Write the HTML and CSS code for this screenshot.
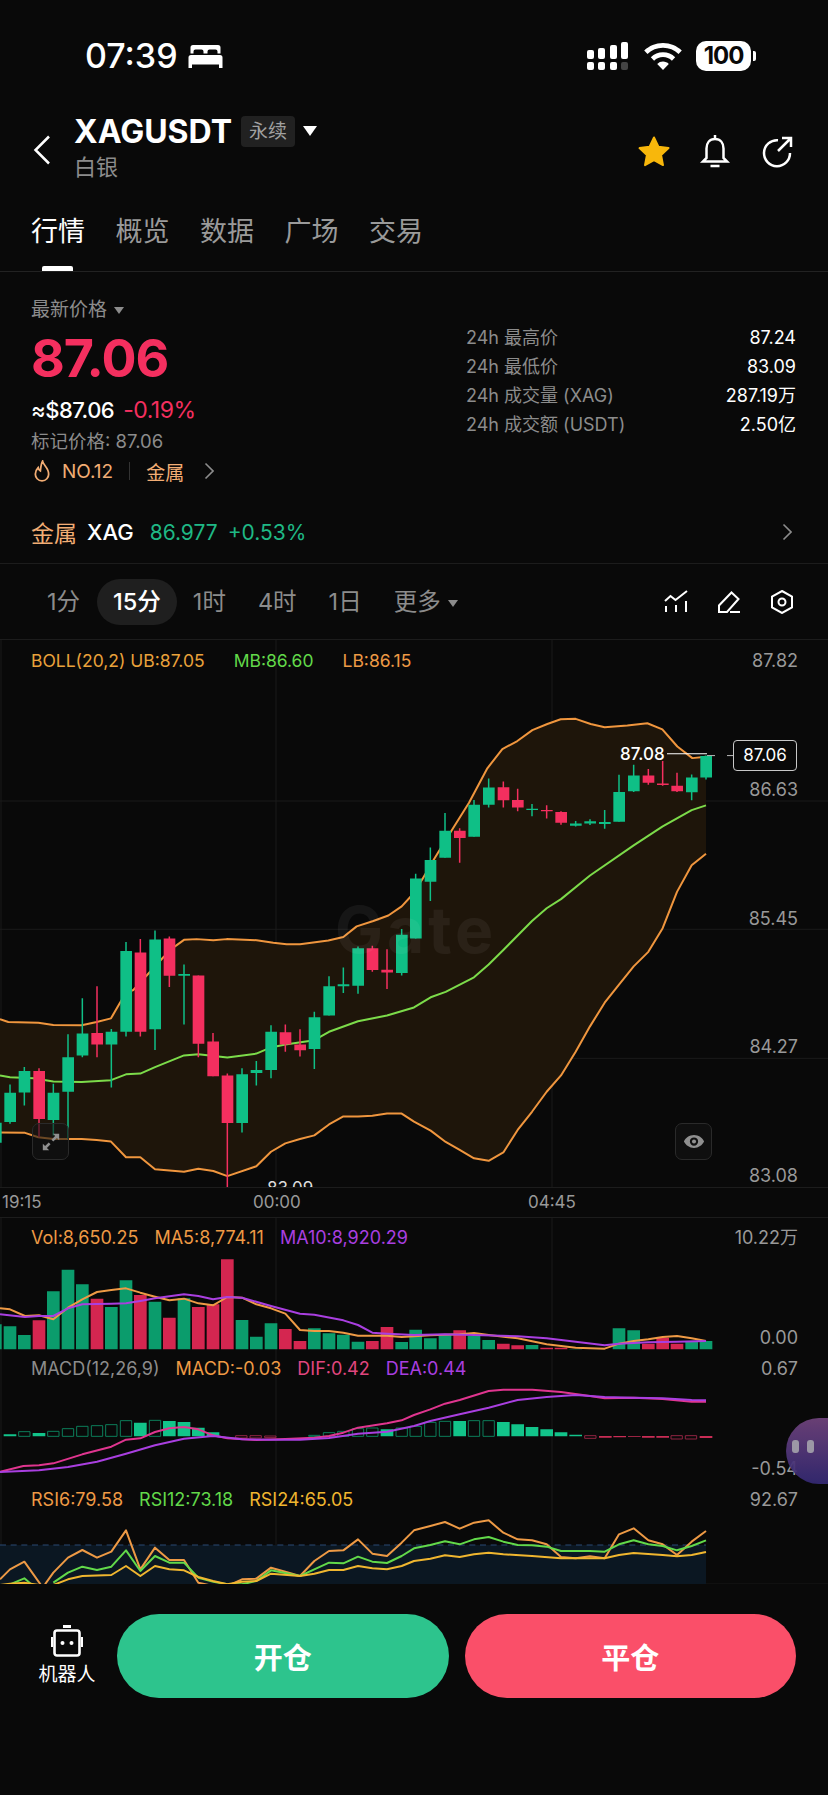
FILE: index.html
```html
<!DOCTYPE html>
<html lang="zh-CN">
<head>
    <meta charset="UTF-8">
    <meta name="viewport" content="width=device-width, initial-scale=1.0">
    <title>XAGUSDT 永续</title>
    <link rel="stylesheet" href="styles.css">
</head>
<body>
    <div class="status-bar">
        <div class="status-left">
            <span class="clock">07:39</span>
            <svg class="bed-icon" viewBox="0 0 35 24" aria-hidden="true"><path d="M5 1h25a2.500 2.500 0 0 1 2.500 2.500V9.500h-3V7.500a2 2 0 0 0-2-2h-6a2 2 0 0 0-2 2v2h-4v-2a2 2 0 0 0-2-2h-6a2 2 0 0 0-2 2v2h-3V3.500A2.500 2.500 0 0 1 5 1z"/><path d="M3 11h29a2.500 2.500 0 0 1 2.500 2.500V24h-3.500v-3.500H4V24H.5V13.500A2.500 2.500 0 0 1 3 11z"/></svg>
        </div>
        <div class="status-right">
            <svg class="signal-icon" viewBox="0 0 42 28" aria-hidden="true">
                <rect x="0" y="8" width="7" height="9" rx="2"/>
                <rect x="11" y="6" width="7" height="11" rx="2"/>
                <rect x="23" y="3" width="7" height="14" rx="2"/>
                <rect x="34" y="0" width="7" height="17" rx="2"/>
                <rect x="0" y="20" width="7" height="8" rx="2"/>
                <rect x="11" y="20" width="7" height="8" rx="2"/>
                <rect x="23" y="20" width="7" height="8" rx="2"/>
                <rect class="signal-off" x="34" y="20" width="7" height="8" rx="2"/>
            </svg>
            <svg class="wifi-icon" viewBox="0 0 38 27" aria-hidden="true"><path d="M19 0c7.300 0 13.900 2.900 18.800 7.500l-3.300 3.500A22.300 22.300 0 0 0 19 4.800 22.300 22.300 0 0 0 3.500 11L.2 7.500C5.100 2.900 11.700 0 19 0z"/><path d="M19 9.300c4.700 0 9 1.900 12.200 4.900l-3.300 3.500A13 13 0 0 0 19 14.100a13 13 0 0 0-8.900 3.600l-3.300-3.500A17.700 17.700 0 0 1 19 9.300z"/><path d="M19 18.600c2.300 0 4.300.9 5.800 2.300L19 27l-5.800-6.100a8.400 8.400 0 0 1 5.800-2.300z"/></svg>
            <div class="battery"><span class="battery-level">100</span><span class="battery-nub"></span></div>
        </div>
    </div>

    <header class="nav">
        <svg class="back-icon" viewBox="0 0 18 30" aria-hidden="true"><path d="M16 1.500 2.500 15 16 28.500"/></svg>
        <div class="symbol">
            <div class="symbol-row">
                <span class="symbol-name">XAGUSDT</span>
                <span class="symbol-badge">永续</span>
                <span class="caret caret-white"></span>
            </div>
            <div class="symbol-sub">白银</div>
        </div>
        <div class="nav-actions">
            <svg class="nav-star" viewBox="0 0 34 32" aria-hidden="true"><path d="M17 2.500l4.400 9.300 10.100 1.300-7.400 7 1.900 10-9-4.900-9 4.900 1.900-10-7.400-7 10.100-1.300z"/></svg>
            <svg class="nav-icon" viewBox="0 0 32 34" aria-hidden="true"><path d="M16 5c-5.500 0-8.500 4-8.500 9.500v9.500L4 27.500h24L24.500 24v-9.500C24.500 9 21.500 5 16 5zM16 1v4M11.500 32h9"/></svg>
            <svg class="nav-icon" viewBox="0 0 32 30" aria-hidden="true"><path d="M17 4.200A13 13 0 1 0 29 17M17 15 30 2M21 2h9v9"/></svg>
        </div>
    </header>

    <nav class="tabs">
        <a class="tab active">行情</a>
        <a class="tab">概览</a>
        <a class="tab">数据</a>
        <a class="tab">广场</a>
        <a class="tab">交易</a>
    </nav>

    <section class="market">
        <div class="quote">
            <div class="quote-type">最新价格<span class="caret caret-grey"></span></div>
            <div class="last-price">87.06</div>
            <div class="quote-usd">≈$87.06<span class="quote-change">-0.19%</span></div>
            <div class="mark-price">标记价格: 87.06</div>
            <div class="hot-row">
                <svg class="flame-icon" viewBox="0 0 18 20" aria-hidden="true"><path d="M9.500 1c.5 3.500 5.500 6 5.500 11.500A6 6 0 0 1 9 19a6 6 0 0 1-6-6.500c0-2.500 1.300-4.200 2.500-5.500.3 1.700 1 2.600 2 3 .4-3.500.6-6.500 2-9z"/></svg>
                <span class="hot-rank">NO.12</span>
                <span class="hot-sep"></span>
                <span class="hot-tag">金属</span>
                <svg class="chevron chevron-hot" viewBox="0 0 10 18" aria-hidden="true"><path d="M1.500 1.500 9 9l-7.500 7.500"/></svg>
            </div>
        </div>
        <div class="stats">
            <div class="stat-row"><span class="stat-label">24h 最高价</span><span class="stat-value">87.24</span></div>
            <div class="stat-row"><span class="stat-label">24h 最低价</span><span class="stat-value">83.09</span></div>
            <div class="stat-row"><span class="stat-label">24h 成交量 (XAG)</span><span class="stat-value">287.19万</span></div>
            <div class="stat-row"><span class="stat-label">24h 成交额 (USDT)</span><span class="stat-value">2.50亿</span></div>
        </div>
    </section>

    <div class="index-row">
        <span class="index-tag">金属</span>
        <span class="index-name">XAG</span>
        <span class="index-price">86.977</span>
        <span class="index-change">+0.53%</span>
        <svg class="chevron chevron-index" viewBox="0 0 10 18" aria-hidden="true"><path d="M1.500 1.500 9 9l-7.500 7.500"/></svg>
    </div>

    <div class="intervals">
        <span class="interval">1分</span>
        <span class="interval active">15分</span>
        <span class="interval">1时</span>
        <span class="interval">4时</span>
        <span class="interval">1日</span>
        <span class="interval">更多<span class="caret caret-grey"></span></span>
        <div class="chart-tools">
            <svg viewBox="0 0 24 24" aria-hidden="true"><path d="M1 11l5.500-5 5 4L23 1M2 16v6M12 15v7M22 11v11"/></svg>
            <svg viewBox="0 0 24 24" aria-hidden="true"><path d="M2 22v-6.500L14.500 2.500l7 6.500L10 22zM13 22h10"/></svg>
            <svg viewBox="0 0 24 24" aria-hidden="true"><path d="M12 1l10 5.500v11L12 23 2 17.500v-11z"/><circle cx="12" cy="12" r="3.500"/></svg>
        </div>
    </div>

    <div class="chart">
        <div class="main-pane">
            <svg class="main-plot" viewBox="0 -3 2484 1505" preserveAspectRatio="none" aria-hidden="true">
                <path class="grid" d="M0 440H2484M0 793H2484M0 1148H2484M828 -3V1502M1656 -3V1502M3 -3V1502"/>
                <path class="boll-band" d="M0 1040L25 1048 115 1050 160 1056 245 1057 290 1048 333 1038 360 995 378 968 400 960 440 920 490 870 525 840 552 822 590 820 640 823 680 820 770 823 820 830 860 834 900 834 985 824 1030 814 1070 785 1120 770 1165 755 1205 730 1235 700 1267 655 1302 600 1352 525 1407 445 1462 350 1507 297 1552 275 1597 245 1642 228 1682 215 1727 214 1772 228 1814 237 1882 232 1942 226 1987 243 2032 290 2077 322 2118 318V585L2075 617 2031 690 1988 790 1945 855 1901 895 1857 945 1814 995 1770 1060 1727 1130 1683 1195 1640 1240 1596 1295 1553 1345 1510 1407 1466 1430 1422 1423 1379 1400 1337 1378 1292 1347 1242 1322 1205 1300 1161 1300 1117 1306 1074 1308 1030 1308 987 1330 943 1360 900 1370 856 1382 813 1405 769 1445 682 1472 640 1458 595 1452 552 1460 465 1453 421 1420 378 1420 333 1377 290 1373 245 1370 160 1370 115 1365 75 1353 0 1352z"/>
                <path class="line line-boll" d="M0 1040L25 1048 115 1050 160 1056 245 1057 290 1048 333 1038 360 995 378 968 400 960 440 920 490 870 525 840 552 822 590 820 640 823 680 820 770 823 820 830 860 834 900 834 985 824 1030 814 1070 785 1120 770 1165 755 1205 730 1235 700 1267 655 1302 600 1352 525 1407 445 1462 350 1507 297 1552 275 1597 245 1642 228 1682 215 1727 214 1772 228 1814 237 1882 232 1942 226 1987 243 2032 290 2077 322 2118 318"/>
                <path class="line line-boll" d="M0 1352L75 1353 115 1365 160 1370 245 1370 290 1373 333 1377 378 1420 421 1420 465 1453 552 1460 595 1452 640 1458 682 1472 769 1445 813 1405 856 1382 900 1370 943 1360 987 1330 1030 1308 1074 1308 1117 1306 1161 1300 1205 1300 1242 1322 1292 1347 1337 1378 1379 1400 1422 1423 1466 1430 1510 1407 1553 1345 1596 1295 1640 1240 1683 1195 1727 1130 1770 1060 1814 995 1857 945 1901 895 1945 855 1988 790 2031 690 2075 617 2118 585"/>
                <path class="line line-mid" d="M0 1195L30 1200 100 1203 160 1212 245 1213 333 1208 378 1192 421 1190 465 1172 552 1140 595 1137 682 1146 769 1135 813 1118 856 1110 943 1098 987 1075 1074 1046 1161 1030 1242 1008 1292 980 1337 965 1422 925 1466 890 1510 850 1553 810 1596 770 1640 735 1683 710 1770 645 1901 562 1988 510 2075 465 2118 452"/>
                <path class="wick wick-up" d="M30 1220V1328M73 1172V1278M160 1218V1360M204 1082V1370M247 983V1145M334 1067V1228M378 828V1088M465 796V1125M552 890V1055M726 1175V1352M769 1155V1223M813 1057V1203M943 1020V1177M987 922V1030M1030 898V968M1074 840V970M1205 792V920M1247 640V818M1291 568V715M1335 473V596M1422 437V538M1466 378V458M1596 448V482M1727 495V510M1770 490V506M1814 465V516M1857 368V497M1901 340V415M2075 367V438M2118 315V381"/>
                <path class="wick wick-down" d="M117 1175V1365M291 950V1145M421 820V1088M508 813V952M595 920V1145M639 1078V1197M682 1190V1503M856 1055V1130M900 1068V1143M1117 838V910M1161 848V957M1379 515V610M1510 386V458M1553 406V468M1640 452V488M1683 468V505M1945 352V395M1988 330V398M2031 362V415"/>
                <path class="body-up" d="M-30 1325h35v55h-35zM13 1243h35v80h-35zM56 1183h35v59h-35zM143 1243h35v75h-35zM187 1145h35v95h-35zM230 1080h35v60h-35zM317 1075h35v35h-35zM361 853h35v222h-35zM448 821h35v247h-35zM535 916h35v5h-35zM709 1192h35v134h-35zM752 1180h35v8h-35zM796 1075h35v105h-35zM926 1035h35v87h-35zM970 950h35v80h-35zM1013 944h35v6h-35zM1057 845h35v103h-35zM1188 808h35v105h-35zM1230 653h35v165h-35zM1274 602h35v60h-35zM1318 522h35v74h-35zM1405 450h35v88h-35zM1449 403h35v47h-35zM1579 461h35v4h-35zM1710 502h35v6h-35zM1753 496h35v6h-35zM1797 498h35v5h-35zM1840 415h35v82h-35zM1884 370h35v43h-35zM2058 375h35v41h-35zM2101 316h35v59h-35z"/>
                <path class="body-down" d="M100 1183h35v132h-35zM274 1078h35v32h-35zM404 857h35v218h-35zM491 818h35v103h-35zM578 920h35v188h-35zM622 1102h35v95h-35zM665 1195h35v131h-35zM839 1076h35v34h-35zM883 1110h35v16h-35zM1100 845h35v60h-35zM1144 904h35v8h-35zM1362 522h35v20h-35zM1493 402h35v36h-35zM1536 437h35v21h-35zM1623 465h35v3h-35zM1666 470h35v30h-35zM1928 370h35v20h-35zM1971 392h35v4h-35zM2014 398h35v15h-35z"/>
                <path class="mark-line" d="M2001 310H2121"/>
                <path class="last-line" d="M2121 315H2199"/>
            </svg>
            <div class="watermark">Gate</div>
            <div class="legend legend-main">
                <span class="c-boll">BOLL(20,2) UB:87.05</span>
                <span class="c-green">MB:86.60</span>
                <span class="c-orange">LB:86.15</span>
            </div>
            <div class="price-axis">
                <span>87.82</span><span>86.63</span><span>85.45</span><span>84.27</span><span>83.08</span>
            </div>
            <div class="high-mark">87.08</div>
            <div class="low-mark">83.09</div>
            <div class="last-tag">87.06</div>
            <div class="chart-btn chart-btn-expand">
                <svg viewBox="0 0 22 22" aria-hidden="true"><path d="M13 2h7v7l-2.500-2.500L13.500 10.500 11.500 8.500 15.500 4.500zM9 20H2v-7l2.500 2.500L8.500 11.500l2 2-4 4z"/></svg>
            </div>
            <div class="chart-btn chart-btn-eye">
                <svg viewBox="0 0 24 16" aria-hidden="true"><path d="M12 1C7 1 3 4 1 8c2 4 6 7 11 7s9-3 11-7c-2-4-6-7-11-7zm0 11.500a4.500 4.500 0 1 1 0-9 4.500 4.500 0 0 1 0 9z"/><circle cx="12" cy="8" r="2.200"/></svg>
            </div>
        </div>

        <div class="time-axis">
            <span class="tick tick-first">19:15</span>
            <span class="tick tick-second">00:00</span>
            <span class="tick">04:45</span>
        </div>

        <div class="sub-panes">
            <svg class="sub-plot" viewBox="0 51 2484 1098" aria-hidden="true">
                <path class="grid" d="M828 51V1150M1656 51V1150M3 51V1150"/>

                <path class="vol-up" d="M-14 370h19V445h-19zM11 376h38V445h-38zM54 402h38V445h-38zM141 271h38V445h-38zM185 206h38V445h-38zM228 250h38V445h-38zM315 318h38V445h-38zM359 238h38V445h-38zM446 302h38V445h-38zM533 292h38V445h-38zM707 357h38V445h-38zM750 407h38V445h-38zM794 367h38V445h-38zM924 382h38V445h-38zM968 397h38V445h-38zM1011 401h38V445h-38zM1055 422h38V445h-38zM1186 423h38V445h-38zM1228 386h38V445h-38zM1272 412h38V445h-38zM1316 402h38V445h-38zM1403 405h38V445h-38zM1447 417h38V445h-38zM1577 432h38V445h-38zM1708 444h38V445h-38zM1838 382h38V445h-38zM1882 388h38V445h-38zM2056 420h38V445h-38zM2099 420h38V445h-38z"/>
                <path class="vol-down" d="M98 358h38V445h-38zM272 293h38V445h-38zM402 282h38V445h-38zM489 350h38V445h-38zM576 318h38V445h-38zM620 310h38V445h-38zM663 175h38V445h-38zM837 384h38V445h-38zM881 420h38V445h-38zM1098 420h38V445h-38zM1142 378h38V445h-38zM1360 388h38V445h-38zM1491 428h38V445h-38zM1534 433h38V445h-38zM1621 440h38V445h-38zM1664 440h38V445h-38zM1926 428h38V445h-38zM1969 410h38V445h-38zM2012 428h38V445h-38z"/>
                <path class="line line-ma5" d="M0 322L30 325 75 345 117 343 160 355 204 320 247 295 291 273 334 267 378 262 421 275 465 287 508 298 552 293 595 307 639 313 682 288 726 290 769 310 813 322 856 338 900 387 943 390 987 390 1030 395 1074 404 1117 404 1161 404 1205 408 1242 406 1291 403 1379 400 1422 396 1466 402 1553 412 1640 430 1727 440 1814 443 1857 428 1901 420 1945 415 1988 408 2031 405 2075 412 2118 420"/>
                <path class="line line-ma10" d="M0 340L75 348 117 345 160 345 204 322 247 310 334 308 378 307 421 300 465 292 552 280 595 285 639 295 682 288 726 290 813 315 900 338 943 341 1030 358 1074 372 1117 395 1161 398 1242 402 1335 400 1422 402 1553 406 1640 412 1727 422 1814 433 1857 428 1945 424 2031 422 2118 420"/>

                <path class="macd-fill" d="M11 700h38v6h-38zM98 696h38v10h-38zM402 665h38v41h-38zM489 660h38v46h-38zM533 663h38v43h-38zM576 680h38v26h-38zM620 694h38v12h-38zM1142 685h38v21h-38zM1360 660h38v46h-38zM1491 663h38v43h-38zM1534 670h38v36h-38zM1577 678h38v28h-38zM1621 685h38v21h-38zM1664 694h38v12h-38zM1708 701h38v5h-38z"/>
                <path class="macd-hollow" d="M56 692h34v14h-34zM143 691h34v15h-34zM187 683h34v23h-34zM230 676h34v30h-34zM274 674h34v32h-34zM317 671h34v35h-34zM361 659h34v47h-34zM448 658h34v48h-34zM926 703h34v3h-34zM970 695h34v11h-34zM1013 691h34v15h-34zM1057 683h34v23h-34zM1100 681h34v25h-34zM1188 681h34v25h-34zM1230 676h34v30h-34zM1274 664h34v42h-34zM1318 661h34v45h-34zM1405 659h34v47h-34zM1449 659h34v47h-34z"/>
                <path class="macd-neg" d="M1797 705h38v5h-38zM1840 705h38v4h-38zM1884 705h38v2h-38zM1926 705h38v5h-38zM1969 705h38v5h-38zM2099 705h38v6h-38z"/>
                <path class="macd-neg-hollow" d="M707 704h34v7h-34zM750 704h34v7h-34zM794 705h34v5h-34zM1754 704h34v8h-34zM2013 704h34v10h-34zM2056 704h34v10h-34z"/>
                <path class="line line-dif" d="M0 812L70 795 117 793 160 787 247 760 334 737 378 716 421 712 465 693 508 682 552 678 595 685 639 703 682 712 769 717 856 714 943 710 987 705 1030 695 1074 680 1161 667 1205 658 1242 642 1291 625 1335 608 1379 597 1466 570 1510 566 1597 566 1683 573 1770 585 1814 592 1901 590 1988 594 2075 602 2118 602"/>
                <path class="line line-dea" d="M0 813L117 808 204 798 291 782 378 758 465 733 552 713 639 705 726 715 813 716 900 716 987 711 1074 698 1161 692 1242 675 1291 660 1379 640 1466 620 1553 597 1640 588 1727 582 1814 588 1901 590 1988 592 2075 597 2118 598"/>

                <path class="rsi-zone" d="M0 1032H2118V1150H0z"/>
                <path class="rsi-limit" d="M0 1032H2118"/>
                <path class="line line-rsi6" d="M0 1135L30 1105 73 1082 125 1155M135 1150L160 1115 204 1070 247 1047 291 1070 334 1052 378 988 421 1105 465 1040 508 1077 552 1077 595 1145 640 1155M682 1155L726 1135 769 1133 813 1100 856 1112 900 1125 943 1080 987 1050 1030 1048 1074 1015 1117 1058 1161 1065 1205 1025 1242 988 1291 975 1335 963 1379 983 1422 965 1466 958 1510 995 1553 1015 1596 1018 1640 1030 1683 1068 1727 1072 1770 1066 1814 1072 1857 1000 1901 982 1945 1018 1988 1030 2031 1062 2075 1022 2118 990"/>
                <path class="line line-rsi12" d="M30 1150L73 1132 100 1155M160 1145L204 1115 247 1097 291 1107 334 1097 378 1048 421 1110 465 1065 508 1085 552 1085 595 1130 640 1142 682 1150 726 1150 769 1140 813 1108 900 1125 943 1105 987 1085 1030 1087 1074 1067 1117 1082 1161 1086 1205 1065 1242 1042 1291 1032 1335 1021 1379 1030 1422 1015 1466 1008 1510 1022 1553 1032 1596 1033 1640 1037 1683 1050 1770 1050 1814 1052 1857 1030 1901 1018 1945 1030 1988 1035 2031 1048 2075 1035 2118 1018"/>
                <path class="line line-rsi24" d="M0 1152L30 1148 73 1145 117 1152M160 1152L204 1135 247 1125 334 1122 378 1095 421 1125 465 1095 508 1105 552 1108 595 1128 639 1140 682 1150 726 1142 769 1140 813 1118 900 1125 943 1118 987 1107 1030 1107 1074 1095 1117 1102 1161 1105 1205 1095 1242 1080 1291 1073 1335 1063 1379 1068 1422 1060 1466 1055 1510 1060 1596 1065 1683 1072 1814 1072 1857 1062 1901 1056 1988 1062 2031 1066 2075 1062 2118 1053"/>
            </svg>

            <div class="pane pane-vol">
                <div class="pane-head">
                    <div class="legend">
                        <span class="c-orange">Vol:8,650.25</span>
                        <span class="c-orange">MA5:8,774.11</span>
                        <span class="c-purple">MA10:8,920.29</span>
                    </div>
                    <span class="pane-scale">10.22万</span>
                </div>
                <div class="pane-foot"><span class="pane-scale">0.00</span></div>
            </div>
            <div class="pane pane-macd">
                <div class="pane-head">
                    <div class="legend">
                        <span class="c-grey">MACD(12,26,9)</span>
                        <span class="c-orange">MACD:-0.03</span>
                        <span class="c-pink">DIF:0.42</span>
                        <span class="c-purple">DEA:0.44</span>
                    </div>
                    <span class="pane-scale">0.67</span>
                </div>
                <div class="pane-foot"><span class="pane-scale">-0.54</span></div>
            </div>
            <div class="pane pane-rsi">
                <div class="pane-head">
                    <div class="legend">
                        <span class="c-orange">RSI6:79.58</span>
                        <span class="c-green">RSI12:73.18</span>
                        <span class="c-yellow">RSI24:65.05</span>
                    </div>
                    <span class="pane-scale">92.67</span>
                </div>
            </div>

            <div class="assistant-bubble"><span></span><span></span></div>
        </div>
    </div>

    <div class="trade-bar">
        <div class="robot">
            <svg viewBox="0 0 32 32" aria-hidden="true">
                <path class="robot-fill" d="M12 0h8v3h-8z"/>
                <rect class="robot-frame" x="3.500" y="5.500" width="25" height="25" rx="2.500"/>
                <path class="robot-fill" d="M0 12h2v10H0zM30 12h2v10h-2z"/>
                <circle class="robot-fill" cx="11.500" cy="18" r="2"/>
                <circle class="robot-fill" cx="20.500" cy="18" r="2"/>
            </svg>
            <span>机器人</span>
        </div>
        <button class="trade-btn btn-open">开仓</button>
        <button class="trade-btn btn-close">平仓</button>
    </div>
</body>
</html>
```

FILE: styles.css
```css
* {
    box-sizing: border-box;
    margin: 0;
    padding: 0;
}

body {
    width: 828px;
    height: 1795px;
    overflow: hidden;
    background-color: #090909;
    color: #FFFFFF;
    font-family: Inter, "Noto Sans CJK SC", sans-serif;
}

/* status bar */
.status-bar {
    height: 112px;
    display: flex;
    align-items: center;
    justify-content: space-between;
    padding: 0 72px 0 85px;
}

.status-left,
.status-right {
    display: flex;
    align-items: center;
}

.clock {
    font-size: 34px;
    font-weight: 500;
    line-height: 40px;
}

.bed-icon {
    width: 35px;
    height: 24px;
    margin-left: 10px;
    fill: #FFFFFF;
}

.signal-icon {
    width: 42px;
    height: 28px;
    fill: #FFFFFF;
}

.signal-off {
    fill: #444444;
}

.wifi-icon {
    width: 38px;
    height: 27px;
    margin-left: 15px;
    fill: #FFFFFF;
}

.battery {
    display: flex;
    align-items: center;
    margin-left: 14px;
}

.battery-level {
    width: 55px;
    height: 30px;
    border-radius: 10px;
    background-color: #FFFFFF;
    color: #090909;
    font-size: 24px;
    font-weight: 700;
    line-height: 30px;
    letter-spacing: -1px;
    text-align: center;
}

.battery-nub {
    width: 3px;
    height: 10px;
    margin-left: 2px;
    border-radius: 0 2px 2px 0;
    background-color: #FFFFFF;
}

/* nav header */
.nav {
    height: 72px;
    display: flex;
    align-items: center;
    padding: 0 35px 0 33px;
}

.back-icon {
    width: 18px;
    height: 30px;
    margin-top: 4px;
    fill: none;
    stroke: #FFFFFF;
    stroke-width: 2.5;
}

.symbol {
    margin-left: 23px;
}

.symbol-row {
    display: flex;
    align-items: center;
    height: 38px;
}

.symbol-name {
    font-size: 32px;
    font-weight: 700;
}

.symbol-badge {
    width: 54px;
    height: 31px;
    margin-left: 9px;
    border-radius: 4px;
    background-color: #212121;
    color: #A0A0A0;
    font-size: 19px;
    line-height: 31px;
    text-align: center;
}

.symbol-sub {
    color: #8C8C8C;
    font-size: 22px;
    line-height: 34px;
}

.caret {
    display: inline-block;
    border-left: 7px solid transparent;
    border-right: 7px solid transparent;
    border-top: 10px solid #FFFFFF;
}

.caret-white {
    margin-left: 8px;
}

.caret-grey {
    margin-left: 7px;
    border-left-width: 5px;
    border-right-width: 5px;
    border-top: 7px solid #8C8C8C;
    vertical-align: middle;
}

.nav-actions {
    display: flex;
    align-items: center;
    margin: 6px 0 0 auto;
}

.nav-star {
    width: 34px;
    height: 32px;
    fill: #F8B70B;
    stroke: #F8B70B;
    stroke-width: 2;
    stroke-linejoin: round;
}

.nav-icon {
    width: 32px;
    height: 34px;
    margin-left: 30px;
    fill: none;
    stroke: #FFFFFF;
    stroke-width: 2.5;
}

.nav-star + .nav-icon {
    margin-left: 28px;
}

/* tabs */
.tabs {
    height: 88px;
    display: flex;
    gap: 30.500px;
    padding: 30px 31px 0;
    border-bottom: 1px solid #222222;
}

.tab {
    position: relative;
    color: #9A9A9A;
    font-size: 27px;
    line-height: 36px;
}

.tab.active {
    color: #FFFFFF;
}

.tab.active::after {
    content: "";
    position: absolute;
    left: 11px;
    bottom: 0;
    width: 31px;
    height: 5px;
    border-radius: 2px 2px 0 0;
    background-color: #FFFFFF;
}

/* quote block */
.market {
    height: 226px;
    display: flex;
    justify-content: space-between;
    padding: 26px 32px 0 31px;
}

.quote-type {
    color: #8C8C8C;
    font-size: 19px;
    line-height: 24px;
}

.last-price {
    margin-top: 7px;
    color: #F42F5F;
    font-size: 52px;
    font-weight: 700;
    line-height: 60px;
    letter-spacing: -1px;
}

.quote-usd {
    margin-top: 8px;
    font-size: 22px;
    font-weight: 500;
    line-height: 26px;
    letter-spacing: -.5px;
}

.quote-change {
    margin-left: 9px;
    color: #F42F5F;
    font-size: 23px;
    font-weight: 400;
}

.mark-price {
    margin-top: 6px;
    color: #8C8C8C;
    font-size: 18.500px;
    line-height: 24px;
}

.hot-row {
    display: flex;
    align-items: center;
    height: 24px;
    margin-top: 6px;
    color: #F2AD74;
    font-size: 19px;
}

.flame-icon {
    width: 20px;
    height: 22px;
    margin-left: 1px;
    fill: none;
    stroke: #F2AD74;
    stroke-width: 1.6;
}

.hot-rank {
    margin-left: 10px;
}

.hot-sep {
    width: 1px;
    height: 18px;
    margin: 0 16px;
    background-color: #333333;
}

.hot-tag {
    font-size: 19px;
}

.chevron {
    width: 10px;
    height: 18px;
    fill: none;
    stroke: #8C8C8C;
    stroke-width: 1.6;
}

.chevron-hot {
    margin-left: 20px;
}

.stats {
    width: 330px;
    margin-top: 25px;
}

.stat-row {
    display: flex;
    justify-content: space-between;
    height: 29px;
    font-size: 18px;
    line-height: 29px;
}

.stat-label {
    color: #8C8C8C;
}

.stat-value {
    color: #FFFFFF;
}

/* index row */
.index-row {
    height: 66px;
    display: flex;
    align-items: center;
    padding: 3px 36px 0 31px;
    border-bottom: 1px solid #1C1C1C;
    font-size: 23px;
}

.index-tag {
    color: #F2AD74;
}

.index-name {
    margin-left: 10px;
    font-size: 22px;
    font-weight: 500;
}

.index-price,
.index-change {
    color: #1FB885;
    font-size: 21px;
}

.index-price {
    margin-left: 16px;
}

.index-change {
    margin-left: 10px;
}

.chevron-index {
    margin-left: auto;
}

/* interval row */
.intervals {
    height: 76px;
    display: flex;
    align-items: center;
    padding: 0 34px 0 31px;
    border-bottom: 1px solid #1C1C1C;
}

.interval {
    height: 46px;
    padding: 0 16px;
    border-radius: 23px;
    color: #8C8C8C;
    font-size: 23.500px;
    line-height: 46px;
}

.interval.active {
    margin-left: 1px;
    background-color: #1F1F1F;
    color: #FFFFFF;
    font-weight: 500;
}

.chart-tools {
    display: flex;
    gap: 29px;
    margin-left: auto;
}

.chart-tools svg {
    width: 24px;
    height: 24px;
    fill: none;
    stroke: #FFFFFF;
    stroke-width: 2;
}

/* chart */
.chart {
    height: 944px;
    border-bottom: 1px solid #101010;
}

.main-pane {
    position: relative;
    height: 547px;
    overflow: hidden;
}

.main-plot {
    position: absolute;
    top: 0;
    left: 0;
    width: 828px;
    height: 547px;
}

.grid {
    fill: none;
    stroke: #1B1B1B;
    stroke-width: 1;
    vector-effect: non-scaling-stroke;
}

.boll-band {
    fill: #1E150A;
}

.line,
.wick,
.mark-line,
.last-line {
    fill: none;
    vector-effect: non-scaling-stroke;
}

.line {
    stroke-width: 2;
    stroke-linejoin: round;
}

.line-boll {
    stroke: #F0963E;
}

.line-mid {
    stroke: #7CDB4A;
}

.wick {
    stroke-width: 1.5;
}

.wick-up {
    stroke: #0FBF86;
}

.wick-down {
    stroke: #F42F5F;
}

.body-up {
    fill: #0FBF86;
}

.body-down {
    fill: #F42F5F;
}

.mark-line {
    stroke: #FFFFFF;
    stroke-width: 1;
}

.last-line {
    stroke: #BBBBBB;
    stroke-width: 1;
    stroke-dasharray: 8 12;
}

.watermark {
    position: absolute;
    top: 254px;
    left: 335px;
    color: #FFFFFF;
    opacity: .05;
    font-size: 64px;
    font-weight: 700;
    line-height: 72px;
    letter-spacing: 4px;
}

.legend {
    display: flex;
    gap: 16px;
    font-size: 18px;
    line-height: 20px;
}

.legend-main {
    position: absolute;
    top: 11px;
    left: 31px;
    gap: 29px;
    font-size: 17.500px;
}

.c-boll {
    color: #E9A23B;
}

.c-green {
    color: #62D94A;
}

.c-orange {
    color: #EE9A45;
}

.c-purple {
    color: #A93FE0;
}

.c-pink {
    color: #E0467F;
}

.c-grey {
    color: #8C8C8C;
}

.c-yellow {
    color: #F0B62F;
}

.price-axis {
    position: absolute;
    top: 11px;
    right: 30px;
    bottom: 1px;
    display: flex;
    flex-direction: column;
    justify-content: space-between;
    align-items: flex-end;
    color: #999999;
    font-size: 18px;
    line-height: 20px;
}

.high-mark {
    position: absolute;
    top: 104px;
    left: 620px;
    font-size: 17px;
    font-weight: 500;
    line-height: 20px;
}

.low-mark {
    position: absolute;
    top: 538px;
    left: 267px;
    color: #DDDDDD;
    font-size: 17px;
    line-height: 20px;
}

.last-tag {
    position: absolute;
    top: 100px;
    left: 733px;
    width: 64px;
    height: 31px;
    border: 1px solid #C8C8C8;
    border-radius: 4px;
    background-color: #090909;
    font-size: 17px;
    line-height: 29px;
    text-align: center;
}

.chart-btn {
    position: absolute;
    top: 483px;
    width: 37px;
    height: 37px;
    display: flex;
    align-items: center;
    justify-content: center;
    border: 1.500px solid #2A2A2A;
    border-radius: 7px;
    background-color: rgba(20, 20, 20, .6);
}

.chart-btn-expand {
    left: 32px;
}

.chart-btn-expand svg {
    width: 20px;
    height: 20px;
    fill: #8F8F8F;
}

.chart-btn-eye {
    left: 675px;
}

.chart-btn-eye svg {
    width: 22px;
    height: 15px;
    fill: #8F8F8F;
}

.time-axis {
    height: 31px;
    display: flex;
    padding-left: 2px;
    border-top: 1px solid #1C1C1C;
    border-bottom: 1px solid #1C1C1C;
    color: #999999;
    font-size: 17px;
    line-height: 28px;
}

.tick-first {
    width: 251px;
}

.tick-second {
    width: 275px;
}

.sub-panes {
    position: relative;
    height: 366px;
    overflow: hidden;
}

.sub-plot {
    position: absolute;
    top: 0;
    left: 0;
    width: 828px;
    height: 366px;
}

.vol-up {
    fill: #0B9C6C;
}

.vol-down {
    fill: #D42650;
}

.line-ma5 {
    stroke: #EE9A45;
}

.line-ma10 {
    stroke: #A93FE0;
}

.macd-fill {
    fill: #12C48A;
}

.macd-hollow {
    fill: none;
    stroke: #0C7D59;
    stroke-width: 3;
}

.macd-neg {
    fill: #C92C55;
}

.macd-neg-hollow {
    fill: none;
    stroke: #8F2442;
    stroke-width: 3;
}

.line-dif {
    stroke: #E0358F;
}

.line-dea {
    stroke: #A93FE0;
}

.rsi-zone {
    fill: #0B1722;
}

.rsi-limit {
    fill: none;
    stroke: #2B4A75;
    stroke-width: 3;
    stroke-dasharray: 18 14;
}

.line-rsi6 {
    stroke: #EE9A45;
}

.line-rsi12 {
    stroke: #62D94A;
}

.line-rsi24 {
    stroke: #F0B62F;
}

.pane {
    position: relative;
    height: 131px;
    display: flex;
    flex-direction: column;
    justify-content: space-between;
    padding: 10px 30px 1px 31px;
}

.pane-rsi {
    height: 104px;
}

.pane-head,
.pane-foot {
    display: flex;
    justify-content: space-between;
}

.pane-foot {
    justify-content: flex-end;
}

.pane-scale {
    color: #999999;
    font-size: 18px;
    line-height: 20px;
}

.assistant-bubble {
    position: absolute;
    top: 200px;
    right: 0;
    width: 42px;
    height: 66px;
    display: flex;
    gap: 8px;
    padding: 22px 0 0 6px;
    border-radius: 33px 0 0 33px;
    background: linear-gradient(#71447E, #352A75);
    opacity: .92;
}

.assistant-bubble span {
    width: 7px;
    height: 13px;
    border-radius: 3px;
    background-color: #A9A4B4;
}

/* bottom bar */
.trade-bar {
    display: flex;
    align-items: flex-start;
    gap: 16px;
    padding: 30px 32px 0;
}

.robot {
    width: 70px;
    flex-shrink: 0;
    margin-right: -1px;
    padding-top: 11px;
    display: flex;
    flex-direction: column;
    align-items: center;
    font-size: 19px;
    line-height: 24px;
}

.robot svg {
    width: 32px;
    height: 32px;
    margin-bottom: 6px;
}

.robot-fill {
    fill: #FFFFFF;
}

.robot-frame {
    fill: none;
    stroke: #FFFFFF;
    stroke-width: 2.600;
}

.trade-btn {
    flex: 1;
    height: 84px;
    border: none;
    border-radius: 42px;
    color: #FFFFFF;
    font-family: inherit;
    font-size: 29px;
    font-weight: 700;
}

.btn-open {
    background-color: #2DC48D;
}

.btn-close {
    background-color: #FA4F69;
}
```
